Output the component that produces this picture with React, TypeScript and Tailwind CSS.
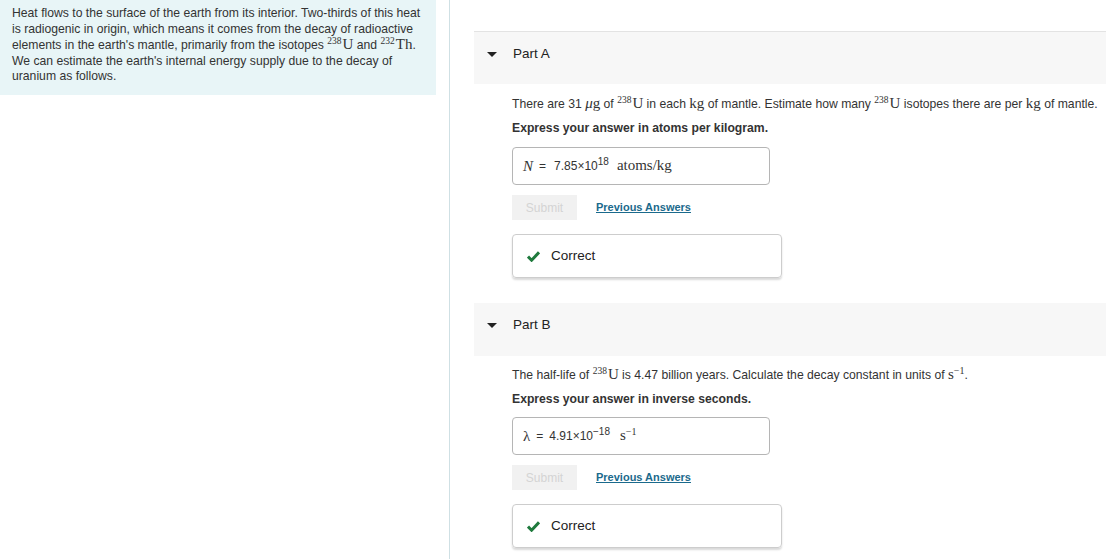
import React from "react";

const sans = { fontFamily: '"Liberation Sans", Arial, sans-serif' };

function Iso({ n, el }: { n: string; el: string }) {
  return (
    <span className="font-[Liberation_Serif,serif] whitespace-nowrap leading-none">
      <span className="relative -top-[5px] text-[9.5px] leading-none">{n}</span>
      <span className="ml-[1px] text-[15px] leading-none">{el}</span>
    </span>
  );
}

function Serif({ children, italic }: { children: React.ReactNode; italic?: boolean }) {
  return <span className={`font-[Liberation_Serif,serif] text-[15px] leading-none ${italic ? "italic" : ""}`}>{children}</span>;
}

function PartHeader({ label, border }: { label: string; border?: boolean }) {
  return (
    <div className={`flex h-[53px] items-center bg-[#f7f7f7] pb-[8px] pl-[13px] ${border ? "border-t border-[#e3e3e3]" : ""}`}>
      <span className="h-0 w-0 border-x-[5px] border-t-[5px] border-x-transparent border-t-[#222]" />
      <span className="ml-[16px] text-[13.5px] text-[#222]">{label}</span>
    </div>
  );
}

function Check() {
  return (
    <svg width="13" height="11" viewBox="0 0 13 11">
      <path d="M1 5.6 L4.6 9.2 L12 1.4" fill="none" stroke="#1f7a3d" strokeWidth="3" />
    </svg>
  );
}

function Answer({ children }: { children: React.ReactNode }) {
  return (
    <div className="flex h-[38px] w-[258px] items-center gap-[6px] rounded-[4px] border border-[#b5b5b5] pl-[10px] text-[12px] text-[#333]">
      {children}
    </div>
  );
}

function Feedback() {
  return (
    <>
      <div className="mt-[10px] flex items-center gap-[19px]">
        <button className="h-[25px] w-[65px] bg-[#f1f1f1] text-[12px] text-[#d4d4d4]">Submit</button>
        <a className="text-[11px] font-bold text-[#1b6a8c] underline">Previous Answers</a>
      </div>
      <div className="mt-[14px] flex h-[44px] w-[270px] items-center rounded-[4px] border border-[#cdcdcd] pl-[14px] shadow-[0_2px_2px_rgba(0,0,0,0.15)]">
        <Check />
        <span className="ml-[11px] text-[13.5px] text-[#222]">Correct</span>
      </div>
    </>
  );
}

export default function App() {
  return (
    <div className="flex h-[559px] w-[1106px] overflow-hidden bg-white text-[#333]" style={sans}>
      <div className="w-[436px] shrink-0 self-start">
        <div className="h-[95px] bg-[#e8f5f7] px-[12px] pt-[6px] text-[12.2px] leading-[15.5px] text-[#333]">
          Heat flows to the surface of the earth from its interior. Two-thirds of this heat is radiogenic in origin, which means it comes from the decay of radioactive elements in the earth's mantle, primarily from the isotopes <Iso n="238" el="U" /> and <Iso n="232" el="Th" />. We can estimate the earth's internal energy supply due to the decay of uranium as follows.
        </div>
      </div>
      <div className="ml-[13px] w-px shrink-0 bg-[#cfe0e4]" />
      <div className="flex-1 pl-[24px] pt-[31px]">
        <PartHeader label="Part A" border />
        <div className="pl-[38px]">
          <p className="mt-[10px] whitespace-nowrap text-[12.2px] leading-[20px]">
            There are 31 <Serif italic>μ</Serif><Serif>g</Serif> of <Iso n="238" el="U" /> in each <Serif>kg</Serif> of mantle. Estimate how many <Iso n="238" el="U" /> isotopes there are per <Serif>kg</Serif> of mantle.
          </p>
          <p className="mt-[4px] text-[12.2px] font-bold leading-[20px]">Express your answer in atoms per kilogram.</p>
          <div className="mt-[9px]">
            <Answer>
              <Serif italic>N</Serif>
              <span>=</span>
              <span className="ml-[2px]">
                7.85×10<sup className="text-[10px]">18</sup>
              </span>
              <span className="ml-[2px]"><Serif>atoms/kg</Serif></span>
            </Answer>
          </div>
          <Feedback />
        </div>
        <div className="mt-[25px]">
          <PartHeader label="Part B" />
        </div>
        <div className="pl-[38px]">
          <p className="mt-[9px] whitespace-nowrap text-[12.2px] leading-[20px]">
            The half-life of <Iso n="238" el="U" /> is 4.47 billion years. Calculate the decay constant in units of <Serif>s</Serif>
            <sup className="font-[Liberation_Serif,serif] text-[10px]">−1</sup>.
          </p>
          <p className="mt-[4px] text-[12.2px] font-bold leading-[20px]">Express your answer in inverse seconds.</p>
          <div className="mt-[8px]">
            <Answer>
              <Serif>λ</Serif>
              <span>=</span>
              <span>
                4.91×10<sup className="text-[10px]">−18</sup>
              </span>
              <span className="ml-[4px]">
                <Serif>s</Serif>
                <sup className="font-[Liberation_Serif,serif] text-[10px]">−1</sup>
              </span>
            </Answer>
          </div>
          <Feedback />
        </div>
      </div>
    </div>
  );
}
